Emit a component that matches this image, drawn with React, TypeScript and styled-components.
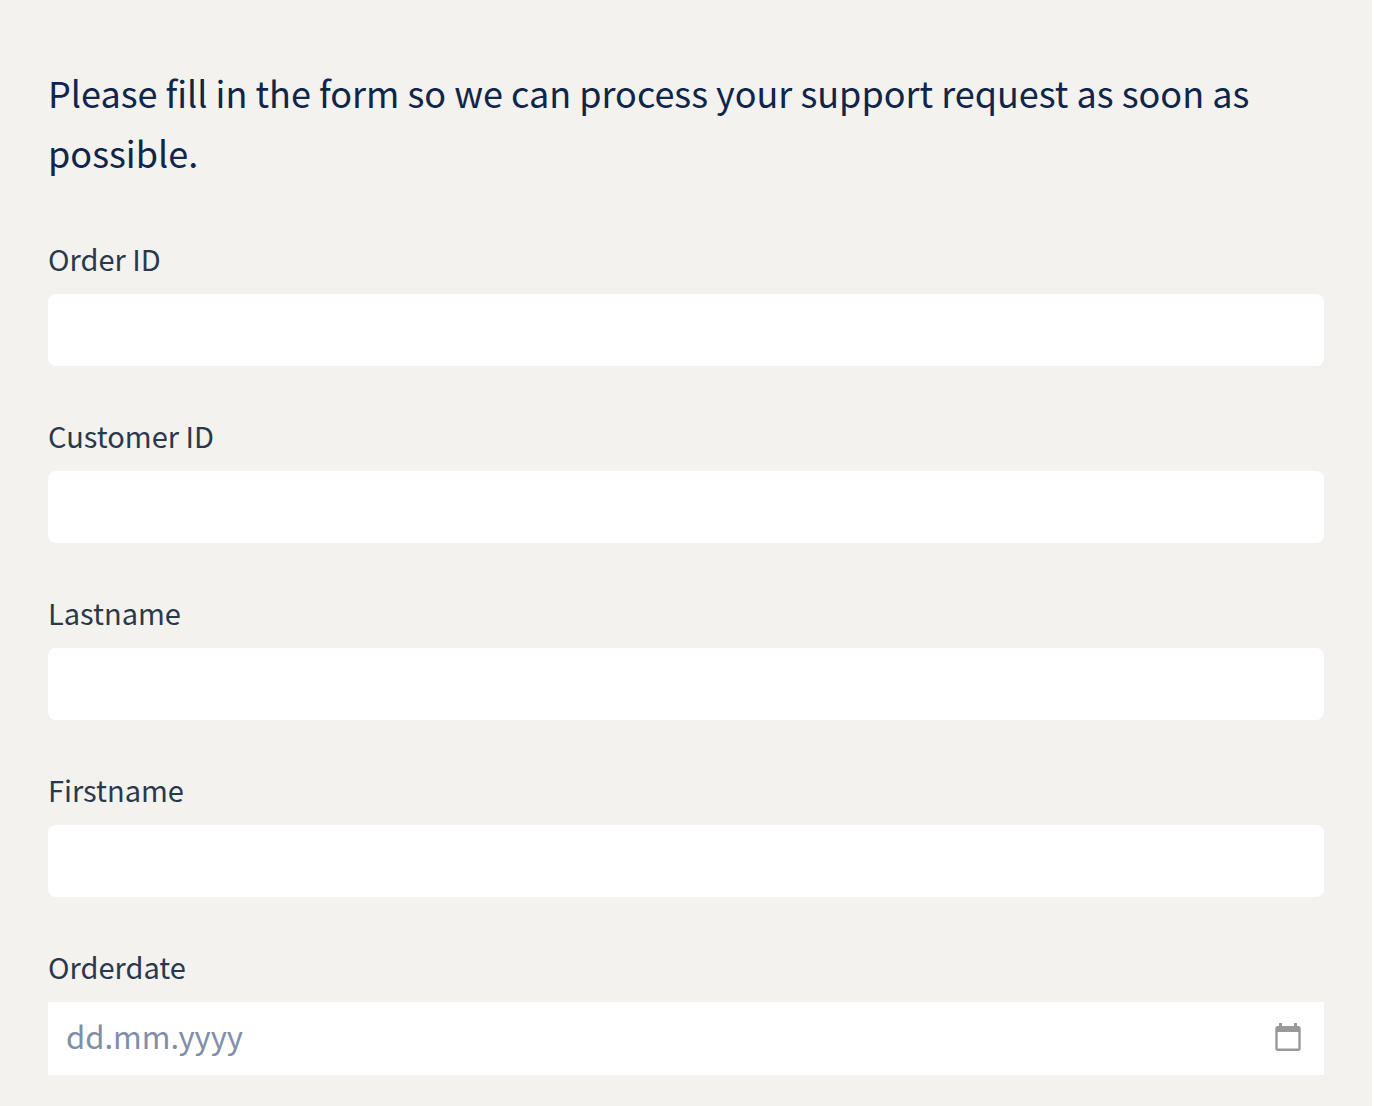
import React from "react";
import styled, { createGlobalStyle } from "styled-components";

const GlobalStyle = createGlobalStyle`
  *, *::before, *::after { box-sizing: border-box; }
  body {
    margin: 0;
    background: #ffffff;
    font-family: "Noto Sans CJK SC", "Noto Sans", sans-serif;
  }
`;

const Page = styled.main`
  min-height: 100vh;
  margin-right: 2px;
  padding: 62px 48px 30px;
  background: #f3f2ee;
`;

const Heading = styled.h1`
  margin: 0 0 52px;
  color: #10254a;
  font-size: 36px;
  font-weight: 400;
  line-height: 60px;
`;

const Form = styled.form`
  display: flex;
  flex-direction: column;
  gap: 45px;
`;

const Field = styled.div`
  display: flex;
  flex-direction: column;
  gap: 12px;
`;

const Label = styled.label`
  color: #2a384b;
  font-size: 29px;
  line-height: 48px;
`;

const TextInput = styled.input`
  width: 100%;
  height: 72px;
  padding: 0 18px;
  border: 0;
  border-radius: 8px;
  background: #ffffff;
  color: #2a384b;
  font: inherit;
  font-size: 31px;
`;

const DateBox = styled.div`
  display: flex;
  align-items: center;
  padding-right: 18px;
  background: #ffffff;
`;

const DateInput = styled(TextInput)`
  flex: 1;
  height: 73px;
  padding: 0 18px 6px;
  border-radius: 0;

  &::placeholder {
    color: #808eaa;
    opacity: 1;
  }
`;

const PickerButton = styled.button`
  display: flex;
  padding: 0;
  border: 0;
  background: transparent;
  color: #999999;
  cursor: pointer;
`;

const CalendarIcon = () => (
  <svg width="36" height="35" viewBox="0 0 36 35" aria-hidden="true">
    <path
      fill="currentColor"
      fillRule="evenodd"
      d="M9 2h3v3h12v-3h3v3h1.2q2.5 0 2.5 2.5V27.5q0 2.5-2.5 2.5H7.8q-2.5 0-2.5-2.5V7.5q0-2.5 2.5-2.5H9zM7.7 11V27.6h20.6V11z"
    />
  </svg>
);

const fields = [
  { id: "order-id", label: "Order ID" },
  { id: "customer-id", label: "Customer ID" },
  { id: "lastname", label: "Lastname" },
  { id: "firstname", label: "Firstname" },
];

export default function App() {
  return (
    <>
      <GlobalStyle />
      <Page>
        <Heading>
          Please fill in the form so we can process your support request as soon as possible.
        </Heading>
        <Form>
          {fields.map(({ id, label }) => (
            <Field key={id}>
              <Label htmlFor={id}>{label}</Label>
              <TextInput id={id} name={id} type="text" />
            </Field>
          ))}
          <Field>
            <Label htmlFor="orderdate">Orderdate</Label>
            <DateBox>
              <DateInput id="orderdate" name="orderdate" type="text" placeholder="dd.mm.yyyy" />
              <PickerButton type="button" aria-label="Open calendar">
                <CalendarIcon />
              </PickerButton>
            </DateBox>
          </Field>
        </Form>
      </Page>
    </>
  );
}
